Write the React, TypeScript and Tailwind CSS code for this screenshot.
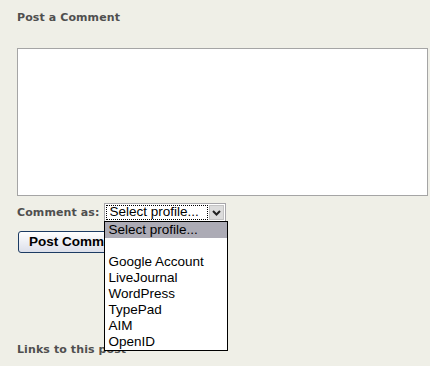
const profiles = ["Google Account", "LiveJournal", "WordPress", "TypePad", "AIM", "OpenID"];

function ChevronDown() {
  return (
    <svg width="9" height="6" viewBox="0 0 9 6" className="block">
      <path d="M1 1 L4.5 4.5 L8 1" fill="none" stroke="#222" strokeWidth="2" />
    </svg>
  );
}

export default function App() {
  return (
    <div className="relative h-[366px] w-[430px] overflow-hidden bg-[#efefe7] px-[17px] pt-[10px] font-['DejaVu_Sans',sans-serif] text-[#4f4f4f]">
      <h4 className="text-[11px] font-bold leading-[16px] tracking-[0.1px]">Post a Comment</h4>

      <div className="mt-[22px] h-[148px] w-[411px] border border-[#a5a5a5] bg-white" />

      <div className="mt-[7px] flex items-center gap-[5px]">
        <span className="text-[11px] font-bold leading-[19px] tracking-[0.1px]">Comment as:</span>

        {/* select box */}
        <div className="relative">
          <div className="flex h-[19px] w-[122px] items-center border border-[#a7a6aa] bg-white p-px">
            <span className="flex h-full flex-1 items-center border border-dotted border-black pl-[2px] font-['Liberation_Sans',sans-serif] text-[13.5px] text-black">
              Select profile...
            </span>
            <span className="ml-px flex h-full w-[15px] items-center justify-center border border-[#c3c3c3] bg-[#dcdcdc]">
              <ChevronDown />
            </span>
          </div>

          {/* open list */}
          <ul className="absolute left-0 top-[18px] z-10 w-[124px] border border-black bg-white font-['Liberation_Sans',sans-serif] text-[13.5px] leading-[16px] text-black">
            <li className="bg-[#acabb5] pl-[3px]">Select profile...</li>
            <li className="h-[16px]" />
            {profiles.map((p) => (
              <li key={p} className="pl-[3px]">
                {p}
              </li>
            ))}
          </ul>
        </div>
      </div>

      <button className="mt-[9px] ml-px h-[22px] rounded-[3px] border border-[#1c3b63] bg-gradient-to-b from-white to-[#dcdfea] px-[10px] font-['Liberation_Sans',sans-serif] text-[13.5px] font-bold leading-[18px] text-black">
        Post Comment
      </button>

      <h4 className="mt-[89px] text-[11px] font-bold leading-[16px] tracking-[0.1px]">Links to this post</h4>
    </div>
  );
}
